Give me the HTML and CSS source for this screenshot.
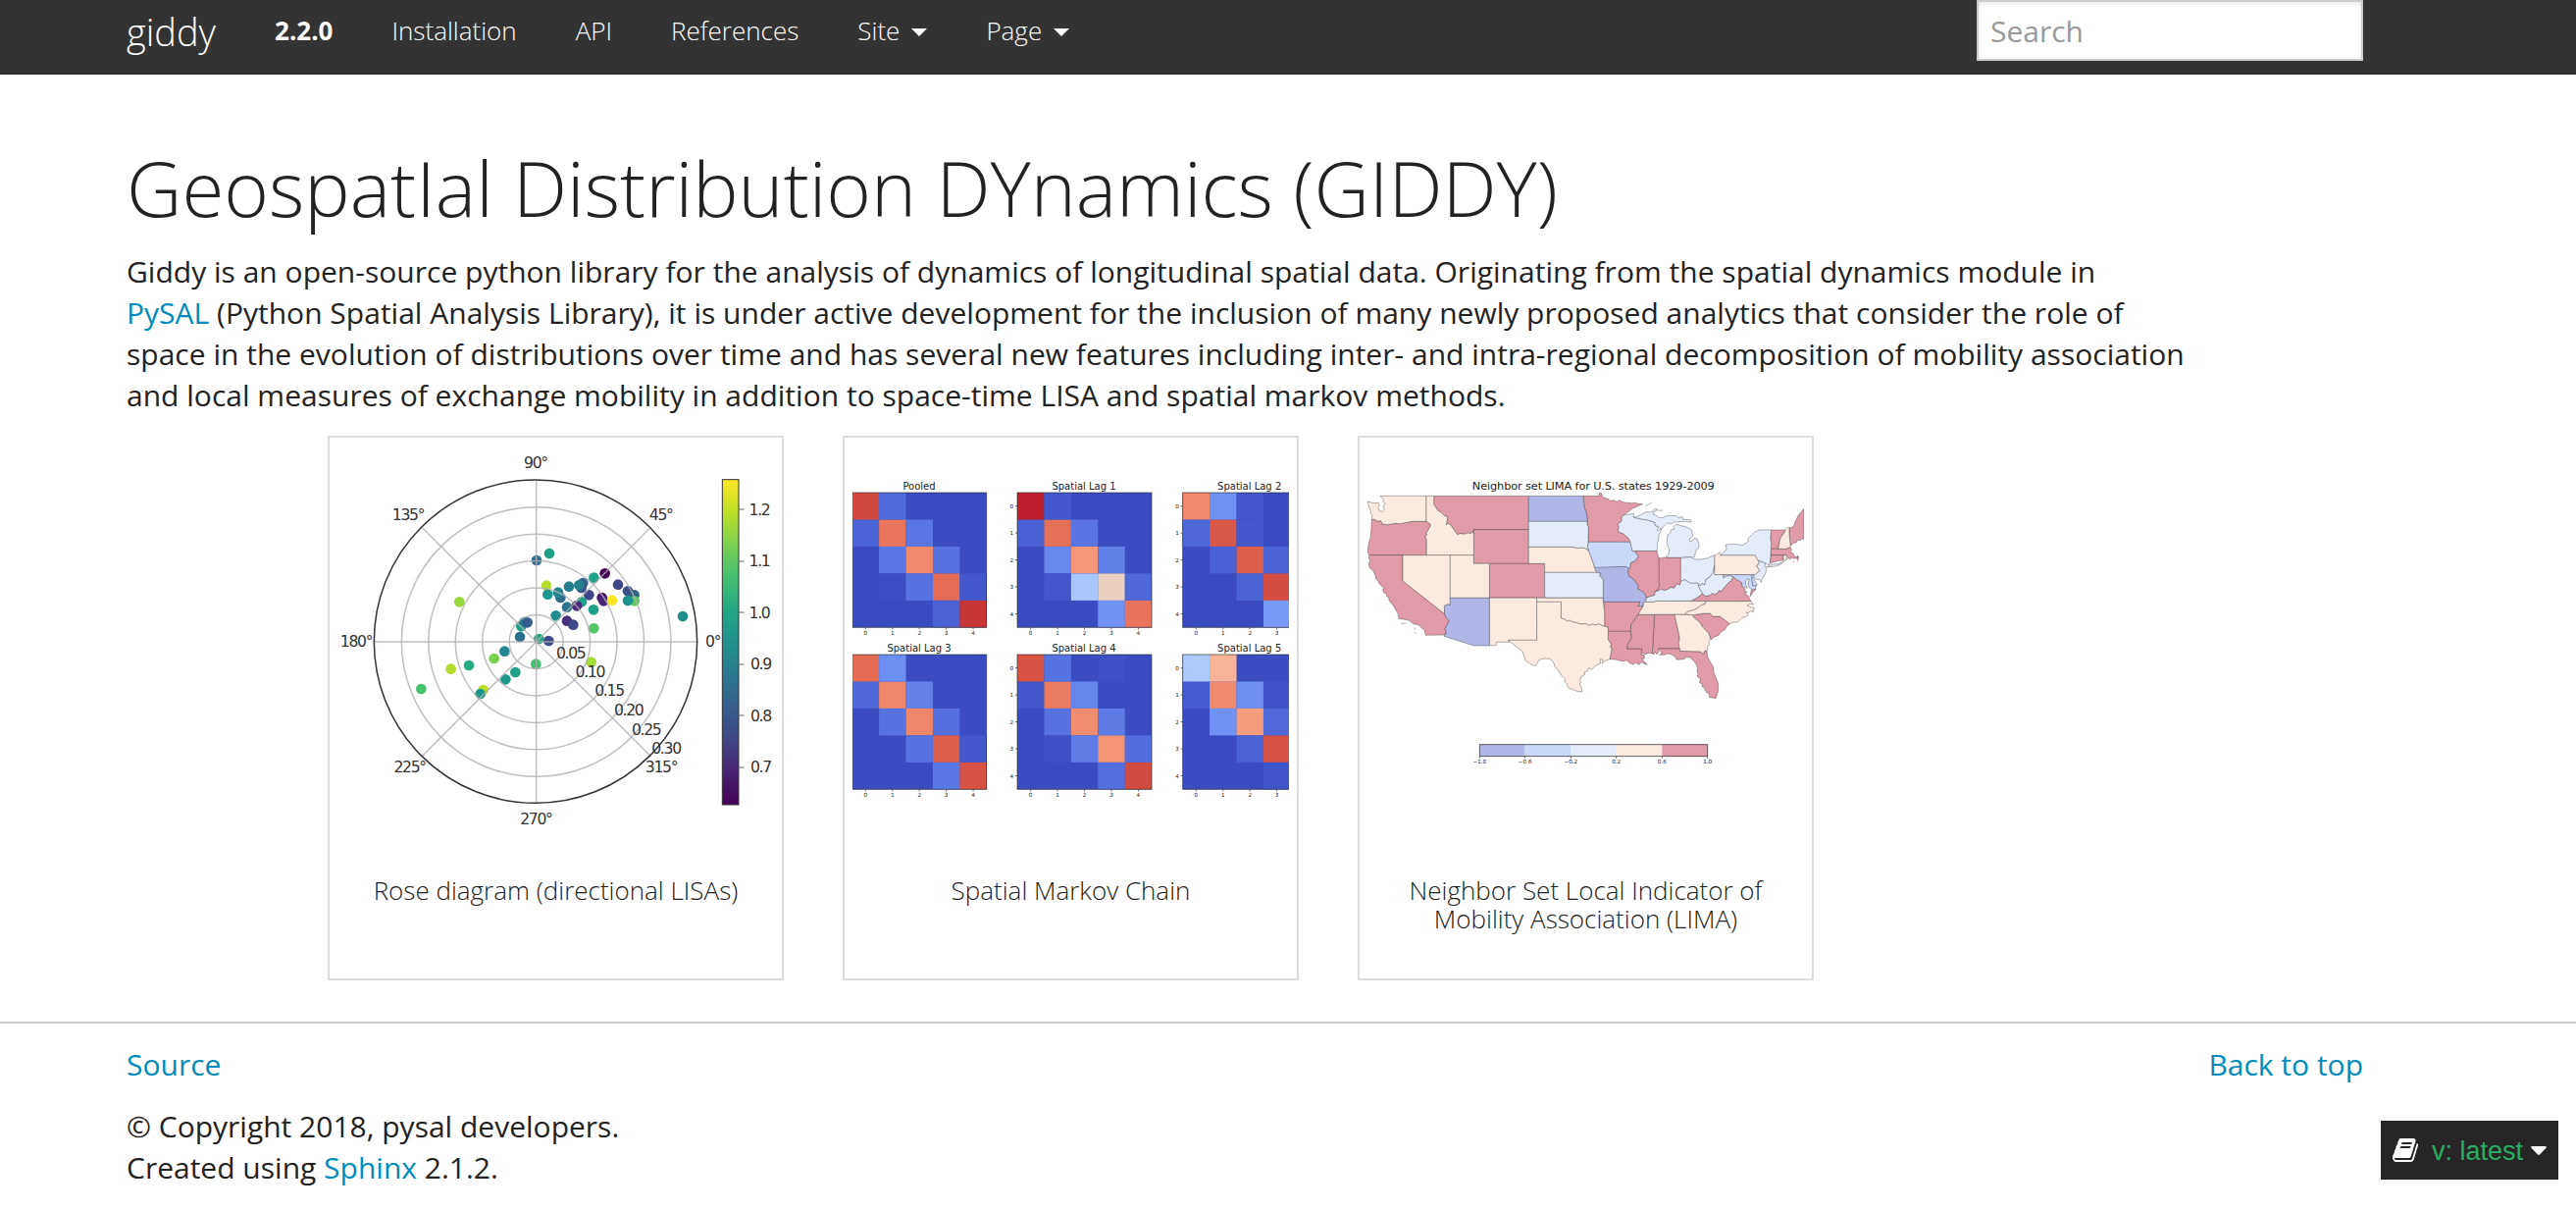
FILE: index.html
```html
<!DOCTYPE html>
<html lang="en">
<head>
<meta charset="utf-8">
<title>Geospatial Distribution Dynamics (GIDDY)</title>
<link rel="stylesheet" href="styles.css">
</head>
<body>
<header class="navbar">
  <nav class="container nav">
    <a class="brand">giddy</a>
    <span class="nav-item version">2.2.0</span>
    <a class="nav-item">Installation</a>
    <a class="nav-item">API</a>
    <a class="nav-item">References</a>
    <a class="nav-item">Site<i class="caret"></i></a>
    <a class="nav-item">Page<i class="caret"></i></a>
    <input class="search" type="text" placeholder="Search">
  </nav>
</header>
<main class="container content">
  <h1>GeospatIal Distribution DYnamics (GIDDY)</h1>
  <p class="intro">Giddy is an open-source python library for the analysis of dynamics of longitudinal spatial data. Originating from the spatial dynamics module in<br><a>PySAL</a> (Python Spatial Analysis Library), it is under active development for the inclusion of many newly proposed analytics that consider the role of<br>space in the evolution of distributions over time and has several new features including inter- and intra-regional decomposition of mobility association<br>and local measures of exchange mobility in addition to space-time LISA and spatial markov methods.</p>
  <div class="cards">
    <div class="card">
      <svg class="plot" id="rose" viewBox="72 72 1335 1200"></svg>
      <div class="caption">Rose diagram (directional LISAs)</div>
    </div>
    <div class="card">
      <svg class="plot" id="markov" viewBox="87 72 1335 1200"></svg>
      <div class="caption">Spatial Markov Chain</div>
    </div>
    <div class="card">
      <svg class="plot" id="lima" viewBox="72 -48 1335 1200">
        <text class="map-title" x="763" y="86" textLength="741">Neighbor set LIMA for U.S. states 1929-2009</text>
        <g class="states">
          <g class="c-high">
            <path d="M85,178L94,178 102,183 113,182 118,192 133,194 157,190 173,191 187,188 208,184 252,184 265,192 264,200 252,220 254,226 248,230 253,238 252,287H78L72,280 74,262 76,250 82,230 84,200Z"/>
            <path d="M275,106H565V209H397V222L393,215 387,222 380,219 367,223 357,221 347,224 337,210 326,194 318,190 313,195 317,170 308,167 298,157 287,150 275,132Z"/>
            <path d="M397,209H565V313H397Z"/>
            <path d="M78,287H180V366L308,466 312,478 322,488 315,500 309,512 313,528 309,531 250,532 246,516 236,508 228,500 212,497 200,487 182,483 168,482 165,465 157,452 150,440 138,425 137,415 131,414 130,405 122,402 118,392 126,388 122,386 108,375 105,366 98,360 95,348 89,334 78,325 76,312 80,305 76,295Z"/>
            <path d="M445,313H614V417H445Z"/>
            <path d="M732,106H781V97L788,98 791,110 808,115 815,121 825,119 834,124 841,119 858,126 880,128 892,127 900,130 914,131 885,143 862,160 850,168 849,184 837,192 841,201 838,215 855,222 870,235 876,247H748L748,200 743,190 745,184 742,160 735,140Z"/>
            <path d="M795,430H906L900,442 915,443 905,460 900,470 892,476 888,487 878,500 877,520H808V508L797,504 797,460Z"/>
            <path d="M808,520H877L880,540 868,560 866,573H911L914,583 908,590 918,592 920,602 912,605 928,622 918,619 909,614 903,622 892,616 886,621 875,618 862,607 858,612 845,610 831,606 813,605 819,575 814,565 818,560 808,546Z"/>
            <path d="M890,274H957L961,290 964,297V375L966,382 960,390 952,400 950,410 935,414 925,417 920,405 908,395 898,390 900,380 885,360 872,352 868,338 875,325 877,310 890,305 900,292 893,280Z"/>
            <path d="M964,295L970,297 975,294H1030V368L1028,378 1018,375 1010,388 1000,386 992,391 980,395 970,391 962,396 952,398 962,388 966,382 964,375Z"/>
            <path d="M1062,427L1080,417 1097,405 1105,412 1120,410 1126,403 1133,407 1143,402 1147,395 1155,397 1161,388 1170,378 1178,369 1185,365 1190,353 1202,362 1213,368 1218,372 1215,382 1227,390 1225,397 1233,400 1226,404 1238,412 1240,419 1245,428ZM1245,395L1261,390 1250,402 1243,413Z"/>
            <path d="M1307,210H1350L1347,218 1335,235 1328,268H1306L1307,250 1304,235Z"/>
            <path d="M1362,203L1375,200 1380,185 1390,165 1407,145V238L1400,237 1396,242 1387,241 1384,248 1376,250 1366,258 1363,240Z"/>
            <path d="M1306,268H1350L1366,264 1370,270 1365,277 1375,283 1377,290 1388,294 1386,288 1391,293 1388,303 1384,296 1375,298 1371,293 1366,299 1360,297 1352,287H1305Z"/>
            <path d="M1305,287H1344V303L1325,305 1303,312Z"/>
            <path d="M1067,475L1075,468 1120,465 1127,474 1150,474 1180,497 1172,503 1165,515 1153,522 1146,532 1132,538 1122,545 1115,525 1098,508 1088,492Z"/>
            <path d="M950,469H1011L1025,530 1024,555 1028,573H962L963,583 957,590 952,582 949,590 943,588Z"/>
            <path d="M900,469H950L943,588 932,586 922,590 910,585 911,573H866L868,560 880,540 877,520 878,500 888,487Z"/>
            <path d="M962,573H1028V580L1090,582 1095,588 1100,588 1104,578 1110,582 1113,600 1120,612 1130,630 1131,645 1145,680 1144,705 1137,725 1128,723 1118,722 1116,710 1108,706 1102,692 1095,688 1096,680 1087,677 1090,665 1080,657 1083,650 1080,642 1082,632 1077,620 1068,608 1058,600 1048,598 1040,605 1018,607 1012,597 1000,590 990,588 980,592 965,592 972,585Z"/>
            <path d="M174,496L190,495M214,510L220,514M216,522L221,527M1372,307H1378M1386,307L1390,305"/>
          </g>
          <g class="c-mid">
            <path d="M111,106H252V184H208L187,188 173,191 157,190 133,194 118,192 113,182 102,183 94,178 85,178 87,165 80,158 83,151 76,140 73,123 90,128 106,127 109,134 105,142 108,150 117,155 124,147 120,140 126,130 118,122 122,119Z"/>
            <path d="M252,106H275V132L287,150 298,157 308,167 317,170 313,195 318,190 326,194 337,210 347,224 357,221 367,223 380,219 387,222 393,215 397,222V287H253V238L248,230 254,226 252,220 264,200 265,192 252,184Z"/>
            <path d="M180,287H325V440L318,437 310,440 307,466 180,366Z"/>
            <path d="M325,287H397V313H445V418H325Z"/>
            <path d="M445,418H590V547H502L507,553H466V563H445Z"/>
            <path d="M565,262H700L715,266 725,264 738,266 748,272 755,290 762,310 768,325 773,340H614V313H565Z"/>
            <path d="M590,418H793V430L797,460V504L790,503 780,497 770,501 760,498 750,502 740,497 722,498 711,493 700,492 690,486 683,489 675,483 664,480V430H590Z"/>
            <path d="M590,430H664V480L675,483 683,489 690,486 700,492 711,493 722,498 740,497 750,502 760,498 770,501 780,497 790,503 808,508V546L818,560 814,565 819,575 813,605 798,611 790,618 792,607 784,605 785,618 768,626 758,637 749,632 746,641 735,645 737,652 727,657 722,668 725,677 720,680 726,690 729,705 717,704 705,700 685,692 682,680 676,675 676,665 665,655 655,638 645,628 640,612 628,604 612,603 597,607 586,626 575,622 555,610 547,582 525,565 502,547H590Z"/>
            <path d="M915,443L918,430H951L953,427 1107,428 1104,437 1092,440 1085,447 1070,455 1050,460 1043,468 900,469 905,460Z"/>
            <path d="M1133,289L1150,278 1152,287H1258L1265,300 1272,305 1262,320 1272,335 1262,343 1255,347H1133Z"/>
            <path d="M1350,210L1357,202 1362,205 1362,225 1366,262 1350,268H1328L1335,235 1347,218Z"/>
            <path d="M1344,287H1352L1357,300 1350,300 1349,305 1344,303Z"/>
            <path d="M1107,428H1245L1253,438 1242,436 1233,441 1245,446 1255,448 1252,461 1243,458 1236,464 1231,461 1236,470 1230,475 1218,478 1205,492 1193,492 1180,497 1150,474H1127L1120,465 1100,465 1067,470 1043,468 1050,460 1070,455 1085,447 1092,440 1104,437Z"/>
            <path d="M1011,469L1067,470V475L1088,492 1098,508 1115,525 1122,545 1116,550 1118,560 1112,568 1110,582 1104,578 1100,588 1090,582 1028,580 1023,555 1027,545 1025,530Z"/>
          </g>
          <g class="c-low">
            <path d="M325,418H445V564H397L306,535 309,528H313L309,512 315,500 322,488 312,478 308,466 307,442 318,438 325,440Z"/>
            <path d="M565,106H732L735,140 742,160 745,184H565Z"/>
            <path d="M765,322L862,322 871,327 868,338 872,352 885,360 900,380 898,390 908,395 920,405 925,417 922,425 915,430 915,443 900,442 906,430H793V362L781,350 786,343 773,340Z"/>
          </g>
          <g class="c-low2">
            <path d="M748,247H876L880,263 882,274 893,280 900,292 890,305 877,310 875,325 871,327 862,322 767,325 762,310 755,290 748,272 745,262Z"/>
            <path d="M1160,347H1247L1250,380 1262,380 1258,391 1248,393 1240,387 1236,375 1239,360 1230,362 1228,372 1234,388 1218,382V372L1213,368 1202,362 1190,353 1180,350 1168,352 1160,357Z"/>
            <path d="M1247,347L1252,345 1252,357 1264,377 1262,380H1250Z"/>
          </g>
          <g class="c-zero">
            <path d="M565,184H745L743,192 748,200 747,245 745,262 748,272 738,266 725,264 715,266 700,262H565Z"/>
            <path d="M614,340H773L786,343 781,350 793,362V417H614Z"/>
            <path d="M850,168L862,163 875,162 887,160 885,170 905,176 930,180 950,187 953,197 961,200 958,212 963,210 973,203 968,216 963,225 962,240 958,255 959,265 957,274H882L876,247 870,235 855,222 838,215 841,201 837,192 849,184Z"/>
            <path d="M887,172L900,168 912,162 922,155 940,155 952,145 960,148 948,155 945,162 955,165 962,172 975,172 988,167 1015,166 1022,172 1035,170 1037,178 1060,179 1063,186 1035,184 1010,186 1000,192 990,188 978,200 970,207 961,200 953,197 950,187 930,180 905,176Z"/>
            <path d="M985,294L993,283 995,270 987,250 990,225 998,220 1000,210 1010,208 1008,200 1015,193 1030,197 1042,199 1062,208 1067,228 1055,241 1062,246 1072,235 1080,238 1086,252 1085,265 1077,272 1072,293 1030,295Z"/>
            <path d="M1030,295L1060,293 1068,298 1078,300 1088,300 1110,297 1133,287V320L1130,338 1119,354 1108,360 1103,378 1095,374 1090,380 1083,373 1060,373 1050,367 1040,362 1030,368Z"/>
            <path d="M922,430L927,417 935,414 950,410 952,398 962,396 970,391 980,395 992,391 1000,386 1010,388 1018,375 1028,378 1030,368 1040,362 1050,367 1060,373 1083,373 1088,390 1097,405 1080,417 1062,427H953L951,430Z"/>
            <path d="M1083,380L1090,380 1095,374 1103,378 1108,360 1119,354 1130,338 1133,320V347H1160V357L1168,352 1180,350 1190,353 1185,365 1178,369 1170,378 1161,388 1155,397 1147,395 1143,402 1133,407 1126,403 1120,410 1105,412 1097,405 1088,390Z"/>
            <path d="M1265,302L1290,312 1287,323 1292,328 1290,342 1280,358 1276,370 1272,362 1258,360 1254,351 1262,343 1272,335 1262,320 1272,312Z"/>
            <path d="M1152,287L1170,270 1168,255 1190,253 1220,256 1237,245 1235,237 1247,225 1258,215 1272,210H1307L1304,235 1307,250 1305,287 1303,310 1300,318 1290,312 1265,302 1258,287ZM1292,324L1310,315 1328,314 1345,307 1338,314 1320,321Z"/>
            <path d="M922,136L941,127M962,151L975,150"/>
          </g>
        </g>
        <g class="legend">
          <path class="c-low" d="M415,866h139v36h-139z"/><path class="c-low2" d="M554,866h140v36h-140z"/><path class="c-zero" d="M694,866h139v36h-139z"/><path class="c-mid" d="M833,866h140v36h-140z"/><path class="c-high" d="M973,866h139v36h-139z"/>
          <path class="legend-frame" d="M415,866H1112V902H415ZM415,902v6M554,902v6M694,902v6M833,902v6M973,902v6M1112,902v6"/>
          <g class="legend-text"><text x="415" y="925">−1.0</text><text x="554" y="925">−0.6</text><text x="694" y="925">−0.2</text><text x="833" y="925">0.2</text><text x="973" y="925">0.6</text><text x="1112" y="925">1.0</text></g>
        </g>
      </svg>
      <div class="caption">Neighbor Set Local Indicator of<br>Mobility Association (LIMA)</div>
    </div>
  </div>
</main>
<footer class="footer">
  <div class="container foot-inner">
    <div class="foot-row"><a>Source</a><a>Back to top</a></div>
    <p class="copy">© Copyright 2018, pysal developers.<br>Created using <a>Sphinx</a> 2.1.2.</p>
  </div>
</footer>
<div class="rtd">
  <svg class="book" viewBox="0 0 1664 1536"><path fill="#fcfcfc" d="M1639 350q40 57 18 129l-275 906q-19 64-76.500 107.500t-122.500 43.500h-923q-77 0-148.500-53.500t-99.500-131.500q-24-67-2-127 0-4 3-27t4-37q1-8-3-21.500t-3-19.500q2-11 8-21t16.500-23.500 16.500-23.500q23-38 45-91.500t30-91.500q3-10 .5-30t-.5-28q3-11 17-28t17-23q21-36 42-92t25-90q1-9-2.500-32t.5-28q4-13 22-30.500t22-22.500q19-26 42.500-84.500t27.500-96.500q1-8-3-25.500t-2-26.500q2-8 9-18t18-23 17-21q8-12 16.500-30.500t15-35 16-36 19.500-32 26.500-23.500 36-11.500 47.500 5.500l-1 3q38-9 51-9h761q74 0 114 56t18 130l-274 906q-36 119-71.500 153.500t-128.500 34.500h-869q-27 0-38 15-11 16-1 43 24 70 144 70h923q29 0 56-15.500t35-41.500l300-987q7-22 5-57 38 15 59 43zm-1064 2q-4 13 2 22.500t20 9.500h608q13 0 25.500-9.500t16.500-22.500l21-64q4-13-2-22.500t-20-9.500h-608q-13 0-25.500 9.500t-16.500 22.500zm-83 256q-4 13 2 22.500t20 9.500h608q13 0 25.500-9.500t16.500-22.500l21-64q4-13-2-22.500t-20-9.500h-608q-13 0-25.500 9.500t-16.500 22.500z"/></svg>
  <span class="rtd-text">v: latest</span>
  <svg class="rtd-caret" viewBox="0 0 16 9"><path fill="#fcfcfc" d="M1,0H15Q16.500,.6 15.500,1.800L9,8.400Q8,9.200 7,8.400L.5,1.800Q-.5,.6 1,0Z"/></svg>
</div>
<script src="plots.js"></script>
</body>
</html>
```
FILE: plots.js
```js
const NS = 'http://www.w3.org/2000/svg';
function add(parent, tag, attrs, text) {
  const el = document.createElementNS(NS, tag);
  for (const k in attrs) el.setAttribute(k, attrs[k]);
  if (text !== undefined) el.textContent = text;
  parent.appendChild(el);
  return el;
}

// Polar scatter of LISA vectors
const rose = document.getElementById('rose');
const CX = 680, CY = 671, R = 494;
const dots = [
  [711,500,'#b5de2b'],[681,423,'#2e6d8e'],[720,402,'#1fa187'],[445,550,'#98d83e'],
  [715,527,'#1f958b'],[754,537,'#2d6a8e'],[747,521,'#23898e'],[780,503,'#277e8e'],
  [823,492,'#33638d'],[818,507,'#3b528b'],[811,499,'#277f8e'],[856,476,'#1fa287'],
  [890,463,'#440154'],[841,529,'#414487'],[819,550,'#1fa187'],[774,566,'#2c728e'],
  [804,562,'#482878'],[881,537,'#481467'],[886,547,'#482475'],[912,545,'#fde725'],
  [930,497,'#404688'],[960,517,'#3b528b'],[980,529,'#33628d'],[980,547,'#5ec962'],
  [960,546,'#1f948c'],[1128,594,'#21908d'],[855,574,'#1f9e89'],[740,592,'#228b8d'],
  [774,608,'#472f7d'],[793,620,'#3f4889'],[856,631,'#54c568'],[634,625,'#1fa088'],
  [643,612,'#26828e'],[653,613,'#365c8d'],[630,657,'#2d708e'],[583,701,'#24868e'],
  [688,663,'#22a884'],[718,669,'#3e4989'],[679,740,'#44bf70'],[848,734,'#a5db36'],
  [551,723,'#7ad151'],[474,744,'#25ac82'],[419,755,'#b2dd2d'],[328,816,'#48c16e'],
  [616,765,'#1fa188'],[586,787,'#1f978b'],[518,819,'#b8de29'],[509,831,'#1f988b']
];
dots.forEach(d => add(rose, 'circle', {cx: d[0], cy: d[1], r: 16, fill: d[2]}));
for (let i = 1; i < 6; i++) add(rose, 'circle', {cx: CX, cy: CY + 1, r: i * 82.4, class: 'grid-line'});
for (let a = 0; a < 8; a++) {
  const t = a * Math.PI / 4;
  add(rose, 'line', {x1: CX, y1: CY + 1, x2: CX + R * Math.cos(t), y2: CY + 1 - R * Math.sin(t), class: 'grid-line'});
}
add(rose, 'circle', {cx: 678, cy: CY, r: R, class: 'rim'});
[['0°',1220,686],['45°',1061,299],['90°',678,140],['135°',288,299],['180°',129,687],['225°',293,1070],['270°',679,1230],['315°',1062,1070],
 ['0.05',785,724],['0.10',844,779],['0.15',903,837],['0.20',962,897],['0.25',1016,956],['0.30',1077,1015],
 ['1.2',1362,286],['1.1',1362,442],['1.0',1362,600],['0.9',1366,756],['0.8',1366,914],['0.7',1366,1070]
].forEach(l => add(rose, 'text', {x: l[1], y: l[2], class: 'rose-text'}, l[0]));
const grad = add(add(rose, 'defs', {}), 'linearGradient', {id: 'viridis', x1: 0, y1: 1, x2: 0, y2: 0});
['#440154','#482475','#414487','#355f8d','#2a788e','#21918c','#22a884','#44bf70','#7ad151','#bddf26','#fde725']
  .forEach((c, i) => add(grad, 'stop', {offset: i / 10, 'stop-color': c}));
add(rose, 'rect', {x: 1249, y: 176, width: 50, height: 994, fill: 'url(#viridis)', class: 'bar-frame'});
[267,426,582,741,897,1056].forEach(y => add(rose, 'path', {d: `M1300,${y}h16`, class: 'tick'}));

// Transition probability matrices
const markov = document.getElementById('markov');
const mats = [
  ['Pooled', 86, 216, 291, {'00':'#d1493f','01':'#506bda','10':'#4b64d5','11':'#e8765c','12':'#5977e3','21':'#5977e3','22':'#f08a6c','23':'#5673e0','31':'#3c4ec2','32':'#5673e0','33':'#e36c55','34':'#4358cb','43':'#4a63d3','44':'#c73635'}],
  ['Spatial Lag 1', 591, 216, 795, {'00':'#bd1f2d','01':'#4358cb','10':'#4961d2','11':'#e57058','12':'#5875e1','21':'#6687ed','22':'#f39778','23':'#5f7fe8','31':'#4257c9','32':'#a9c6fd','33':'#ead0c1','34':'#4e68d8','43':'#6f92f3','44':'#e7745b'}],
  ['Spatial Lag 2', 1097, 216, 1301, {'00':'#f08a6c','01':'#7093f3','02':'#4257c9','10':'#4e68d8','11':'#d95847','12':'#4257c9','21':'#4961d2','22':'#dd5f4b','23':'#4a63d3','32':'#4a63d3','33':'#d44e41','43':'#779af7'}],
  ['Spatial Lag 3', 86, 711, 291, {'00':'#e36b54','01':'#6c8ff1','10':'#4e68d8','11':'#ef886b','12':'#6282ea','21':'#5673e0','22':'#ef886b','23':'#5470de','32':'#5673e0','33':'#dc5d4a','34':'#4358cb','43':'#5a78e4','44':'#d75445'}],
  ['Spatial Lag 4', 591, 711, 795, {'00':'#d75445','01':'#5673e0','03':'#3e51c5','10':'#4358cb','11':'#ea7b60','12':'#6485ec','21':'#5673e0','22':'#f18d6f','23':'#5d7ce6','31':'#3e51c5','32':'#5e7de7','33':'#f39475','34':'#536edd','43':'#5470de','44':'#d24b40'}],
  ['Spatial Lag 5', 1097, 711, 1301, {'00':'#aec9fc','01':'#f7b497','10':'#455cce','11':'#f08b6e','12':'#6c8ff1','13':'#3f53c6','21':'#6f92f3','22':'#f59c7d','23':'#4f69d9','32':'#4a63d3','33':'#d65244','43':'#4055c8'}]
];
mats.forEach(([title, x, y, tx, cells]) => {
  add(markov, 'rect', {x, y, width: 411, height: 412, fill: '#3b4cc0'});
  for (const k in cells) {
    add(markov, 'rect', {x: x + k[1] * 82.3, y: y + k[0] * 82.4, width: 82.3, height: 82.4, fill: cells[k]});
  }
  add(markov, 'rect', {x, y, width: 411, height: 412, class: 'mat-frame'});
  add(markov, 'text', {x: tx, y: y - 10, class: 'mat-title'}, title);
  for (let i = 0; i < 5; i++) {
    // the last column of the right-hand matrices lies outside the thumbnail
    if (x < 1000 || i < 4) {
      add(markov, 'text', {x: x + 41 + i * 82.3, y: y + 436, class: 'mat-num'}, i);
      add(markov, 'path', {d: `M${x + 41 + i * 82.3},${y + 412}v6`, class: 'tick'});
    }
    if (x > 100) {
      add(markov, 'text', {x: x - 17, y: y + 47 + i * 82.4, class: 'mat-num'}, i);
      add(markov, 'path', {d: `M${x},${y + 41 + i * 82.4}h-6`, class: 'tick'});
    }
  }
});
```
FILE: styles.css
```css
* { box-sizing: border-box; }
body { margin: 0; min-height: 1234px; background: #fff; color: #222; font: 30px/42px "Open Sans", sans-serif; position: relative; }
a { color: #008cba; text-decoration: none; }
.container { width: 2280px; margin-left: 129px; }
.navbar { height: 76px; background: #333; border-bottom: 2px solid #2e2b2b; }
.nav { display: flex; align-items: flex-start; }
.nav a, .version { color: #fff; }
.brand { font-size: 38px; font-weight: 300; line-height: 64px; padding-right: 30px; }
.nav-item { display: flex; align-items: center; padding: 0 30px; font-size: 26px; font-weight: 300; line-height: 62px; height: 62px; }
.nav .version { font-weight: 700; }
.caret { margin: 4px 0 0 12px; border: 8px solid transparent; border-top-color: #fff; border-bottom: 0; }
.search { margin-left: auto; width: 394px; height: 62px; padding: 0 12px; border: 2px solid #ccc; font: 30px "Open Sans", sans-serif; background: #fff; box-shadow: inset 0 2px 4px rgba(0,0,0,.1); }
.search::placeholder { color: #999; opacity: 1; }
.content { padding-top: 69px; height: 965px; }
h1 { margin: 0; font-size: 78px; line-height: 92px; font-weight: 300; white-space: nowrap; }
.intro { margin: 19px 0 20px; white-space: nowrap; letter-spacing: .012px; }
.cards { display: flex; gap: 60px; padding-left: 205px; }
.card { width: 465px; height: 555px; border: 2px solid #ddd; padding: 8px; }
.plot { display: block; width: 445px; height: 400px; }
.caption { padding-top: 39px; text-align: center; font-size: 26px; line-height: 29px; font-weight: 300; white-space: nowrap; }
.footer { border-top: 2px solid #cacaca; }
.foot-row { display: flex; justify-content: space-between; padding-top: 21px; }
.copy { margin: 21px 0 0; }
.rtd { position: fixed; right: 18px; top: 1142px; width: 181px; height: 60px; background: #272525; display: flex; align-items: center; padding-left: 12px; }
.book { width: 26px; height: 24px; }
.rtd-text { margin: 2px 0 0 14px; font: 27px "Liberation Sans", Arial, sans-serif; color: #27ae60; }
.rtd-caret { width: 16px; height: 9px; margin-left: 8px; }
svg text { font-family: "DejaVu Sans", sans-serif; text-anchor: middle; fill: #222; }
.grid-line { fill: none; stroke: #b0b0b0; stroke-opacity: .8; stroke-width: 4.500; }
.rim { fill: none; stroke: #333; stroke-width: 4.500; }
svg .rose-text { font-size: 47px; letter-spacing: -4px; fill: #333; }
.bar-frame { stroke: #333; stroke-width: 3; }
.tick { stroke: #444; stroke-width: 2.500; fill: none; }
.mat-frame { fill: none; stroke: #222; stroke-opacity: .6; stroke-width: 3; }
.mat-title { font-size: 30px; }
.mat-num { font-size: 17px; }
.map-title { font-size: 34px; }
.states { stroke: #222; stroke-opacity: .5; stroke-width: 2; stroke-linejoin: round; }
.c-high { fill: #e19aa8; }
.c-mid { fill: #faeae0; }
.c-low { fill: #b0b6e5; }
.c-low2 { fill: #c9d8fa; }
.c-zero { fill: #e4ecfa; }
.legend-frame { fill: none; stroke: #222; stroke-opacity: .7; stroke-width: 3; }
.legend-text { font-size: 17px; }
```
